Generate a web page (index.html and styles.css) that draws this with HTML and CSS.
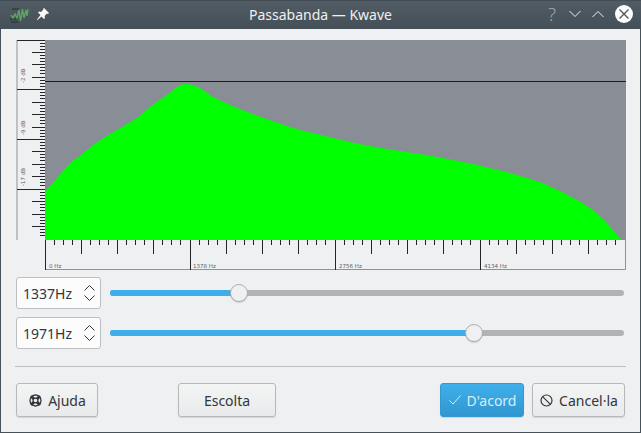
FILE: index.html
```html
<!DOCTYPE html>
<html lang="ca">
<head>
<meta charset="utf-8">
<title>Passabanda — Kwave</title>
<link rel="stylesheet" href="styles.css">
</head>
<body>
<div class="window">
  <header class="titlebar">
    <div class="title-left">
      <svg class="app-icon" width="20" height="18" viewBox="0 0 20 18">
        <path d="M1 14h8M2 17h7M3 4h7" stroke="#33393e" stroke-width="1.5" fill="none"/>
        <path d="M2 10l2 3 2-4 2 4 2-8 1.5 11 2-12 1.5 9 2-8 1 6 1-7" stroke="#58a85c" stroke-width="1.4" fill="none"/>
      </svg>
      <svg class="pin-icon" width="12" height="12" viewBox="0 0 12 12">
        <path d="M7 0l5 5-1 1-1-.5-2.500 2.500.5 2-1 1-2.500-2.500L.5 12 0 11.500l3.500-4.500L1 4.500l1-1 2 .5L6.500 1.500 6 1z" fill="#fcfcfc"/>
      </svg>
    </div>
    <div class="title-text">Passabanda — Kwave</div>
    <div class="title-right">
      <span class="help-glyph">?</span>
      <svg width="12" height="8" viewBox="0 0 12 8"><path d="M.5 1l5.500 5.500L11.500 1" stroke="#eff0f1" stroke-width="1" fill="none"/></svg>
      <svg width="12" height="8" viewBox="0 0 12 8"><path d="M.5 7L6 1.500 11.500 7" stroke="#eff0f1" stroke-width="1" fill="none"/></svg>
      <svg width="18" height="18" viewBox="0 0 18 18"><circle cx="9" cy="9" r="9" fill="#fcfcfc"/><path d="M4.500 4.500l9 9M13.500 4.500l-9 9" stroke="#4a545c" stroke-width="1.300"/></svg>
    </div>
  </header>
  <main class="content">
    <svg class="plot" width="610" height="230" viewBox="16 40 610 230">
      <rect x="45" y="40" width="581" height="200" fill="#898e96"/>
      <path d="M45 191L49 187L53 183L58 177L63 171L71 162L80 156L93 145L105 137L117 130L127 124L137 118L150 107L158 101L167 95L177 87L182 84.500L188 84L194 85.500L200 88L213 97L230 105L250 113L275 122L300 130L325 136L350 142L375 147L400 151L420 154L440 157.500L473 164L507 172L540 182L560 191L580 201.500L593 210L601 217L607 223L612 229L617 235L622 240L45 240Z" fill="#00ff00"/>
      <path d="M45 81.500H626" stroke="#1c1f22" stroke-width="1"/>
      <path d="M17 40V240M45 269.500H625.500V240" stroke="#8f9193" fill="none"/>
      <g stroke="#232629" fill="none" shape-rendering="crispEdges">
        <path d="M17 40.500H45M17 89.500H45M17 139.500H45M17 189.500H45"/>
        <path d="M32 52.500H45M32 64.500H45M32 77.500H45M32 102.500H45M32 114.500H45M32 127.500H45M32 151.500H45M32 164.500H45M32 176.500H45M32 201.500H45M32 214.500H45M32 226.500H45"/>
        <path d="M40 43.500h5M40 46.500h5M40 49.500h5M40 55.500h5M40 58.500h5M40 61.500h5M40 67.500h5M40 70.500h5M40 73.500h5M40 80.500h5M40 83.500h5M40 86.500h5M40 92.500h5M40 95.500h5M40 98.500h5M40 105.500h5M40 108.500h5M40 111.500h5M40 117.500h5M40 120.500h5M40 123.500h5M40 130.500h5M40 133.500h5M40 136.500h5M40 142.500h5M40 145.500h5M40 148.500h5M40 154.500h5M40 157.500h5M40 160.500h5M40 167.500h5M40 170.500h5M40 173.500h5M40 179.500h5M40 182.500h5M40 185.500h5M40 192.500h5M40 195.500h5M40 198.500h5M40 204.500h5M40 207.500h5M40 210.500h5M40 217.500h5M40 220.500h5M40 223.500h5M40 229.500h5M40 232.500h5M40 235.500h5"/>
        <path d="M45.500 240V270M190.500 240V270M335.500 240V270M480.500 240V270"/>
        <path d="M81.500 240v14M117.500 240v14M153.500 240v14M226.500 240v14M262.500 240v14M298.500 240v14M371.500 240v14M407.500 240v14M443.500 240v14M516.500 240v14M552.500 240v14M588.500 240v14"/>
        <path d="M54.500 240v5M63.500 240v5M72.500 240v5M90.500 240v5M99.500 240v5M108.500 240v5M126.500 240v5M135.500 240v5M144.500 240v5M162.500 240v5M171.500 240v5M180.500 240v5M199.500 240v5M208.500 240v5M217.500 240v5M235.500 240v5M244.500 240v5M253.500 240v5M271.500 240v5M280.500 240v5M289.500 240v5M307.500 240v5M316.500 240v5M325.500 240v5M344.500 240v5M353.500 240v5M362.500 240v5M380.500 240v5M389.500 240v5M398.500 240v5M416.500 240v5M425.500 240v5M434.500 240v5M452.500 240v5M461.500 240v5M470.500 240v5M489.500 240v5M498.500 240v5M507.500 240v5M525.500 240v5M534.500 240v5M543.500 240v5M561.500 240v5M570.500 240v5M579.500 240v5M597.500 240v5M606.500 240v5M615.500 240v5"/>
      </g>
      <g class="axis-label">
        <text transform="translate(25 83) rotate(-90)">-2 dB</text>
        <text transform="translate(25 135) rotate(-90)">-9 dB</text>
        <text transform="translate(25 186) rotate(-90)">-17 dB</text>
        <text x="49" y="267.500">0 Hz</text>
        <text x="193" y="267.500">1378 Hz</text>
        <text x="339" y="267.500">2756 Hz</text>
        <text x="484" y="267.500">4134 Hz</text>
      </g>
    </svg>

    <div class="control-row">
      <div class="spinbox">
        <span>1337Hz</span>
        <svg width="11" height="16" viewBox="0 0 11 16"><path d="M.5 5.500L5.500.5l5 5M.5 10.500l5 5 5-5" stroke="#31363b" stroke-width="1" fill="none"/></svg>
      </div>
      <div class="slider">
        <div class="slider-fill" style="width: 129px"></div>
        <div class="slider-handle" style="left: 120px"></div>
      </div>
    </div>
    <div class="control-row">
      <div class="spinbox">
        <span>1971Hz</span>
        <svg width="11" height="16" viewBox="0 0 11 16"><path d="M.5 5.500L5.500.5l5 5M.5 10.500l5 5 5-5" stroke="#31363b" stroke-width="1" fill="none"/></svg>
      </div>
      <div class="slider">
        <div class="slider-fill" style="width: 364px"></div>
        <div class="slider-handle" style="left: 355px"></div>
      </div>
    </div>

    <hr class="separator">

    <div class="button-row">
      <button class="btn btn-help">
        <svg width="13" height="13" viewBox="0 0 13 13">
          <circle cx="6.500" cy="6.500" r="5.500" fill="none" stroke="#31363b" stroke-width="1.300"/>
          <circle cx="6.500" cy="6.500" r="2.400" fill="none" stroke="#31363b" stroke-width="1.200"/>
          <path d="M2 2L5 5M11 2L8 5M2 11L5 8M11 11L8 8" stroke="#31363b" stroke-width="3"/>
        </svg>
        Ajuda
      </button>
      <button class="btn btn-listen">Escolta</button>
      <button class="btn btn-ok">
        <svg width="12" height="10" viewBox="0 0 12 10"><path d="M.5 5.500L4 9 11.500.5" stroke="#d7ecf8" stroke-width="1" fill="none"/></svg>
        D'acord
      </button>
      <button class="btn btn-cancel">
        <svg width="13" height="13" viewBox="0 0 13 13"><circle cx="6.500" cy="6.500" r="5.500" fill="none" stroke="#31363b" stroke-width="1.200"/><path d="M2.600 2.600l7.800 7.800" stroke="#31363b" stroke-width="1.200"/></svg>
        Cancel·la
      </button>
    </div>
  </main>
</div>
</body>
</html>
```
FILE: styles.css
```css
* { box-sizing: border-box; }

html, body {
  margin: 0;
  padding: 0;
  background: #eff0f1;
}

.window {
  width: 641px;
  height: 433px;
  display: flex;
  flex-direction: column;
  background: #eff0f1;
  border-left: 1px solid #47515a;
  border-right: 1px solid #47515a;
  border-bottom: 1px solid #47515a;
  font-family: "Noto Sans", sans-serif;
  font-size: 14px;
  font-feature-settings: "locl" 0;
  color: #31363b;
}

.titlebar {
  flex: none;
  height: 29px;
  margin: 0 -1px;
  padding: 0 9px 2px;
  display: flex;
  align-items: center;
  justify-content: space-between;
  position: relative;
  background: linear-gradient(#515c64, #454f57);
  border-top: 1px solid #434d55;
}

.title-left {
  display: flex;
  align-items: center;
  gap: 8px;
}

.title-text {
  position: absolute;
  left: 0;
  right: 0;
  text-align: center;
  font-size: 14px;
  color: #eff0f1;
}

.title-right {
  display: flex;
  align-items: center;
  gap: 11px;
  margin-right: -1px;
}

.help-glyph {
  color: #a9afb4;
  font-size: 19px;
  font-family: "Open Sans", sans-serif;
  font-weight: 300;
  line-height: 18px;
  margin-right: 2px;
}

.content {
  flex: 1;
  padding: 11px 14px 0 15px;
  display: flex;
  flex-direction: column;
}

.plot {
  display: block;
  flex: none;
  margin-bottom: 7px;
}

.axis-label text {
  font-family: "DejaVu Sans", sans-serif;
  font-size: 5.500px;
  fill: #5c6166;
}

.control-row {
  height: 32px;
  display: flex;
  align-items: center;
  gap: 9px;
  margin-bottom: 8px;
  flex: none;
}

.spinbox {
  width: 85px;
  height: 32px;
  padding: 0 5px 0 6px;
  display: flex;
  align-items: center;
  justify-content: space-between;
  background: #fcfcfc;
  border: 1px solid #bcbebf;
  border-radius: 3px;
}

.slider {
  width: 514px;
  height: 6px;
  position: relative;
  background: #b2b3b4;
  border-radius: 3px;
}

.slider-fill {
  height: 6px;
  background: #3daee9;
  border-radius: 3px 0 0 3px;
}

.slider-handle {
  position: absolute;
  top: -6px;
  width: 18px;
  height: 18px;
  border-radius: 50%;
  background: #eff0f1;
  border: 1px solid #adaeaf;
  box-shadow: 0 1px 1px rgba(0, 0, 0, 0.15);
}

.separator {
  flex: none;
  width: 611px;
  height: 1px;
  margin: 9px 0 16px -1px;
  border: 0;
  background: #bdbfc1;
}

.button-row {
  display: flex;
  flex: none;
  height: 34px;
  padding-right: 1px;
}

.btn {
  height: 34px;
  padding: 0;
  display: flex;
  align-items: center;
  justify-content: center;
  gap: 6px;
  font: inherit;
  font-feature-settings: "locl" 0;
  color: #31363b;
  background: linear-gradient(#f3f4f4, #e9eaeb);
  border: 1px solid #b6b8ba;
  border-radius: 3px;
  box-shadow: 0 1px 1px rgba(0, 0, 0, 0.12);
}

.btn-help { width: 82px; padding-left: 1px; }
.btn-listen { width: 98px; margin-left: 80px; }
.btn-ok {
  width: 84px;
  margin-left: auto;
  padding-left: 1px;
  color: #d7ecf8;
  background: linear-gradient(#3fb0eb, #3096cf);
  border-color: #3498d0;
}
.btn-cancel { width: 93px; margin-left: 8px; padding-left: 1px; }
```
